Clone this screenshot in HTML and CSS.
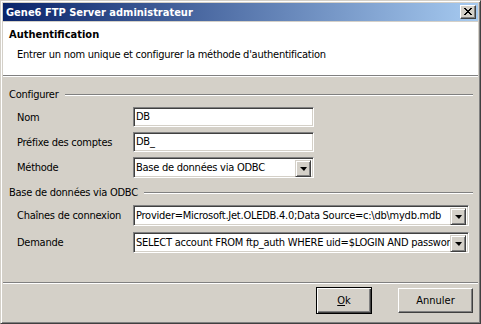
FILE: index.html
```html
<!DOCTYPE html>
<html lang="fr">
<head>
    <meta charset="UTF-8">
    <title>Gene6 FTP Server administrateur</title>
    <link rel="stylesheet" href="styles.css">
</head>
<body>
    <div class="window">
        <div class="titlebar">
            <span class="title">Gene6 FTP Server administrateur</span>
            <span class="close">
                <svg width="8" height="7" viewBox="0 0 8 7" shape-rendering="crispEdges">
                    <path d="M0 0h2v1h-2zM6 0h2v1h-2zM1 1h2v1h-2zM5 1h2v1h-2zM2 2h4v1h-4zM3 3h2v1h-2zM2 4h4v1h-4zM1 5h2v1h-2zM5 5h2v1h-2zM0 6h2v1h-2zM6 6h2v1h-2z" fill="#000"/>
                </svg>
            </span>
        </div>

        <div class="header">
            <h1>Authentification</h1>
            <p>Entrer un nom unique et configurer la méthode d'authentification</p>
        </div>

        <div class="content">
            <div class="group">
                <span class="group-label">Configurer</span>
                <span class="rule"></span>
            </div>
            <div class="row first">
                <label>Nom</label>
                <div class="field">DB</div>
            </div>
            <div class="row">
                <label>Préfixe des comptes</label>
                <div class="field">DB_</div>
            </div>
            <div class="row">
                <label>Méthode</label>
                <div class="combo">
                    <span class="combo-text">Base de données via ODBC</span>
                    <span class="combo-btn"><span class="arrow"></span></span>
                </div>
            </div>

            <div class="group second">
                <span class="group-label">Base de données via ODBC</span>
                <span class="rule"></span>
            </div>
            <div class="row first wide">
                <label>Chaînes de connexion</label>
                <div class="combo">
                    <span class="combo-text">Provider=Microsoft.Jet.OLEDB.4.0;Data Source=c:\db\mydb.mdb</span>
                    <span class="combo-btn"><span class="arrow"></span></span>
                </div>
            </div>
            <div class="row wide">
                <label>Demande</label>
                <div class="combo">
                    <span class="combo-text">SELECT account FROM ftp_auth WHERE uid=$LOGIN AND password=$PASSWORD</span>
                    <span class="combo-btn"><span class="arrow"></span></span>
                </div>
            </div>
        </div>

        <div class="footer">
            <button class="btn default"><span class="ul">O</span>k</button>
            <button class="btn cancel">Annuler</button>
        </div>
    </div>
</body>
</html>
```

FILE: styles.css
```css
* {
    margin: 0;
    padding: 0;
    box-sizing: border-box;
}

body {
    font-family: "DejaVu Sans Condensed", "DejaVu Sans", sans-serif;
    font-size: 11px;
    line-height: 13px;
    letter-spacing: -0.25px;
    color: #000;
    background: #d4d0c8;
}

.window {
    width: 481px;
    height: 324px;
    display: flex;
    flex-direction: column;
    background: #d4d0c8;
    border: 1px solid;
    border-color: #d4d0c8 #404040 #404040 #d4d0c8;
    box-shadow: inset 1px 1px #fff, inset -1px -1px #808080;
    padding: 2px;
}

.titlebar {
    height: 18px;
    display: flex;
    align-items: center;
    justify-content: space-between;
    padding: 0 2px 0 3px;
    background: linear-gradient(90deg, #0a246a 0%, #a6caf0 100%);
}

.title {
    color: #fff;
    font-weight: bold;
    letter-spacing: 0;
}

.close {
    width: 16px;
    height: 14px;
    display: flex;
    align-items: center;
    justify-content: center;
    background: #d4d0c8;
    border: 1px solid;
    border-color: #fff #404040 #404040 #fff;
    box-shadow: inset -1px -1px #808080;
    padding-bottom: 1px;
}

.header {
    margin-top: 1px;
    height: 54px;
    background: #fff;
    border-bottom: 1px solid #808080;
    padding: 6px 6px 0;
}

.header h1 {
    font-size: 11px;
    font-weight: bold;
    letter-spacing: 0;
}

.header p {
    margin-top: 7px;
    padding-left: 8px;
}

.content {
    flex: 1;
    border-top: 1px solid #fff;
    border-bottom: 1px solid #808080;
    padding: 0 5px 0 6px;
}

.group {
    display: flex;
    align-items: center;
    height: 13px;
    margin-top: 11px;
}

.group.second {
    margin-top: 8px;
}

.rule {
    flex: 1;
    height: 2px;
    margin-left: 6px;
    border-top: 1px solid #808080;
    border-bottom: 1px solid #fff;
}

.row {
    display: flex;
    align-items: center;
    margin-top: 5px;
    padding-left: 8px;
}

.row.first {
    margin-top: 6px;
}

.row.wide {
    margin-top: 6px;
}

.row label {
    width: 116px;
}

.field,
.combo {
    width: 181px;
    height: 20px;
    background: #fff;
    border: 1px solid;
    border-color: #808080 #fff #fff #808080;
    box-shadow: inset 1px 1px #404040, inset -1px -1px #d4d0c8;
    padding: 2px 3px 0 2px;
    white-space: nowrap;
    overflow: hidden;
}

.combo {
    height: 21px;
    display: flex;
    padding: 2px;
}

.wide .combo {
    width: 336px;
}

.combo-text {
    flex: 1;
    overflow: hidden;
    padding-top: 1px;
}

.combo-btn {
    width: 16px;
    height: 17px;
    flex: none;
    display: flex;
    align-items: center;
    justify-content: center;
    background: #d4d0c8;
    border: 1px solid;
    border-color: #d4d0c8 #404040 #404040 #d4d0c8;
    box-shadow: inset 1px 1px #fff, inset -1px -1px #808080;
}

.arrow {
    width: 0;
    height: 0;
    border-left: 4px solid transparent;
    border-right: 3px solid transparent;
    border-top: 4px solid #000;
}

.footer {
    height: 38px;
    border-top: 1px solid #fff;
    display: flex;
    justify-content: flex-end;
    align-items: flex-start;
    gap: 26px;
    padding: 3px 5px 0 0;
}

.btn {
    font: inherit;
    color: #000;
    background: #d4d0c8;
    border: 1px solid;
    border-color: #fff #404040 #404040 #fff;
    box-shadow: inset -1px -1px #808080;
}

.btn.default {
    width: 56px;
    height: 27px;
    border: 1px solid #000;
    box-shadow: inset 1px 1px #fff, inset -1px -1px #404040, inset -2px -2px #808080;
}

.btn.cancel {
    width: 75px;
    height: 25px;
    margin-top: 1px;
}

.ul {
    text-decoration: underline;
}
```
